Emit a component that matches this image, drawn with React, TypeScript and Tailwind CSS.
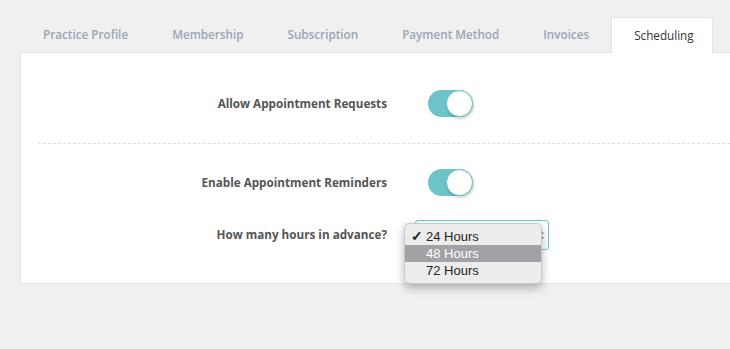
import React from "react";

const tabs = ["Practice Profile", "Membership", "Subscription", "Payment Method", "Invoices", "Scheduling"];

function Toggle() {
  return (
    <div className="relative h-[27px] w-[45px] rounded-full bg-[#6cc3c8]">
      <div className="absolute right-0 top-0 h-[27px] w-[27px] rounded-full border border-[#6cc3c8] bg-white shadow-[1px_2px_3px_rgba(0,0,0,0.18)]" />
    </div>
  );
}

export default function App() {
  return (
    <div className="h-[349px] w-[730px] overflow-hidden bg-[#f0f0f0] pl-[20px] pt-[17px]" style={{ fontFamily: '"Open Sans", sans-serif' }}>
      <div className="flex h-[35px] items-stretch pl-[1px]">
        {tabs.map((t) => {
          const active = t === "Scheduling";
          return (
            <div
              key={t}
              className={
                active
                  ? "relative z-10 -mb-px flex shrink-0 items-center whitespace-nowrap rounded-t-[3px] border border-b-0 border-[#e3e3e3] bg-white pl-[22px] pr-[18px] text-[11.7px] font-normal text-[#333]"
                  : "flex shrink-0 items-center whitespace-nowrap px-[22px] text-[11.7px] font-semibold text-[#9aa5b5]"
              }
            >
              {t}
            </div>
          );
        })}
      </div>
      <div className="relative h-[232px] border border-r-0 border-[#e3e3e3] bg-white">
        <div className="flex h-[90px] items-center pt-[11px]">
          <div className="w-[366px] text-right text-[11.7px] font-bold text-[#555]">Allow Appointment Requests</div>
          <div className="ml-[41px]"><Toggle /></div>
        </div>
        <div className="ml-[17px] border-t border-dashed border-[#dedede]" />
        <div className="flex h-[76px] items-center pt-[1px]">
          <div className="w-[366px] text-right text-[11.7px] font-bold text-[#555]">Enable Appointment Reminders</div>
          <div className="ml-[41px]"><Toggle /></div>
        </div>
        <div className="relative flex items-center">
          <div className="w-[366px] text-right text-[11.7px] font-bold text-[#555]">How many hours in advance?</div>
          <div className="relative ml-[28px] h-[30px] w-[134px] rounded-[3px] border border-[#6cc3c8] bg-white">
            <svg className="absolute right-[3px] top-[8px]" width="8" height="13" viewBox="0 0 8 13">
              <path d="M1 5 L4 1.5 L7 5 Z" fill="#777" />
              <path d="M1 8 L4 11.5 L7 8 Z" fill="#777" />
            </svg>
            <div
              className="absolute left-[-12px] top-[2px] w-[138px] rounded-[5px] border border-[#c8c8c8] bg-[#ececec] py-[4px] text-[13px] text-[#222] shadow-[0_4px_10px_rgba(0,0,0,0.28)]"
              style={{ fontFamily: '"Liberation Sans", Arial, sans-serif' }}
            >
              <div className="relative flex h-[17px] items-center pl-[21px]">
                <span className="absolute left-[6px] text-[14px] font-bold">✓</span>
                24 Hours
              </div>
              <div className="flex h-[17px] items-center bg-[#a2a1a6] pl-[21px] text-white">48 Hours</div>
              <div className="flex h-[17px] items-center pl-[21px]">72 Hours</div>
            </div>
          </div>
        </div>
      </div>
    </div>
  );
}
